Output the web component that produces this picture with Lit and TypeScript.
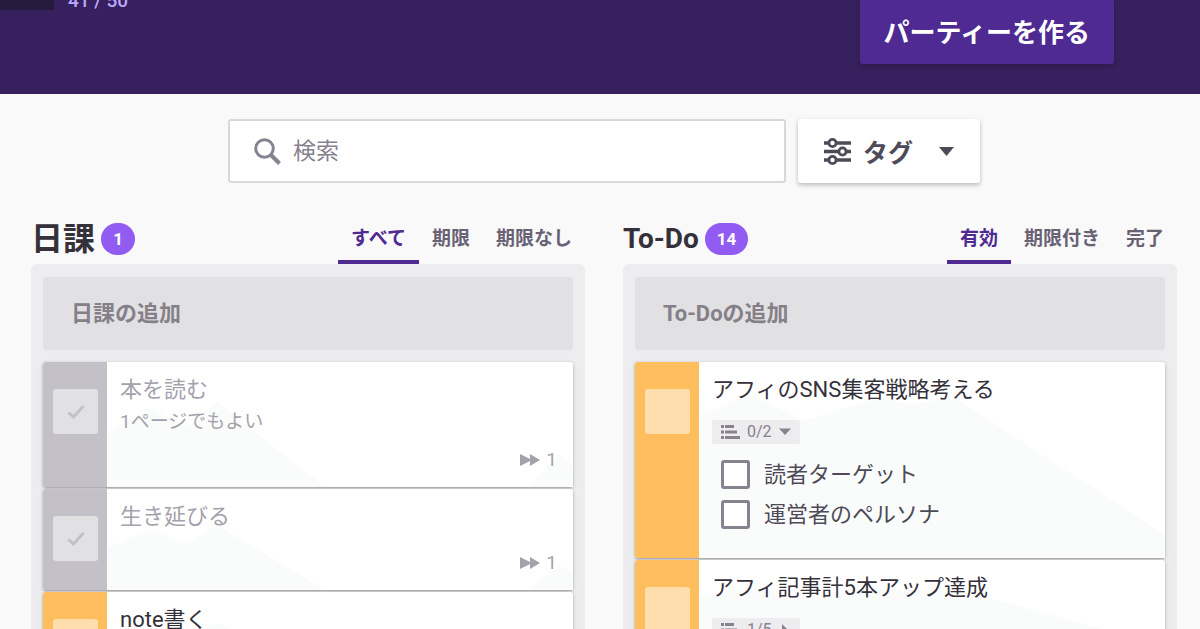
import { LitElement, html, css, svg, nothing } from "lit";
import { customElement, property } from "lit/decorators.js";
import { classMap } from "lit/directives/class-map.js";

interface Task {
  title: string;
  notes?: string;
  done?: boolean;
  streak?: number;
  progress?: string;
  open?: boolean;
  items?: string[];
}

const shared = css`
  *,
  *::before,
  *::after {
    box-sizing: border-box;
  }
  button,
  input {
    font: inherit;
    color: inherit;
    margin: 0;
    border: 0;
    padding: 0;
    background: none;
  }
  svg {
    display: block;
    flex: none;
  }
`;

@customElement("task-card")
class TaskCard extends LitElement {
  @property({ attribute: false }) task!: Task;

  static styles = [
    shared,
    css`
      :host {
        display: block;
      }
      .card {
        display: flex;
        border-radius: 3px;
        background: #fff;
        color: #34313a;
        box-shadow: 0 1px 2px rgba(26, 24, 29, 0.26), 0 1px 4px rgba(26, 24, 29, 0.16);
      }
      .control {
        flex: none;
        width: 64px;
        padding: 27px 10px 0;
        border-radius: 3px 0 0 3px;
        background: #ffbe5d;
      }
      .tick {
        display: grid;
        place-items: center;
      }
      .tick > * {
        grid-area: 1 / 1;
      }
      .tick svg {
        pointer-events: none;
      }
      .box {
        appearance: none;
        width: 45px;
        height: 45px;
        border-radius: 3px;
        background: #ffdeae;
      }
      .done .control {
        background: #c3c0c7;
      }
      .done .box {
        background: #e1e0e3;
      }
      .done .body {
        color: #a5a1ac;
      }
      .body {
        position: relative;
        flex: 1;
        min-width: 0;
        padding: 12px 16px 13px 13px;
        overflow: hidden;
      }
      .ridge {
        position: absolute;
        inset: auto 0 0;
        width: 100%;
        height: calc(100% - 24px);
      }
      .content {
        position: relative;
        display: flex;
        flex-direction: column;
        align-items: flex-start;
      }
      .title {
        margin: 0 0 4px;
        font-size: 22px;
        line-height: 32px;
        font-weight: 400;
      }
      .notes {
        margin: 0;
        font-size: 19px;
        line-height: 24px;
      }
      .streak {
        display: flex;
        align-items: center;
        align-self: flex-end;
        gap: 6px;
        margin-top: 12px;
        font-size: 19px;
        line-height: 28px;
      }
      .toggle {
        display: flex;
        align-items: center;
        gap: 7px;
        height: 24px;
        margin-top: 10px;
        padding: 0 9px;
        border-radius: 2px;
        background: #edecee;
        color: #878190;
        font-size: 16px;
        line-height: 24px;
      }
      .items {
        margin: 10px 0 0;
        padding: 0 0 11px;
        list-style: none;
      }
      .item {
        display: flex;
        align-items: center;
        gap: 14px;
        height: 40px;
        padding-left: 9px;
        color: #4e4a57;
        font-size: 22px;
      }
      .item span {
        padding-bottom: 4px;
      }
      .sub {
        appearance: none;
        flex: none;
        width: 29px;
        height: 29px;
        border: 3px solid #878190;
        border-radius: 3px;
        background: #fff;
      }
    `,
  ];

  private ridge() {
    return this.task.progress
      ? svg`<svg class="ridge" viewBox="0 0 466 171" preserveAspectRatio="none" aria-hidden="true">
          <path d="M0 30 50 8 105 34 180 12 210 18 256 12 466 148V171H0Z" fill="#fafcfb" />
        </svg>`
      : svg`<svg class="ridge" viewBox="0 0 466 77" preserveAspectRatio="none" aria-hidden="true">
          <path d="M0 35 43 17 80 31 110 12 218 77H0ZM421 77 452 52 466 60V77Z" fill="#fafcfb" />
        </svg>`;
  }

  render() {
    const t = this.task;
    return html`
      <article class=${classMap({ card: true, done: !!t.done })}>
        <div class="control">
          <label class="tick">
            <input class="box" type="checkbox" aria-label=${t.title} .checked=${!!t.done} />
            ${t.done
              ? html`<svg width="18" height="16" viewBox="0 0 18 16">
                  <path d="M1.5 8.5 6.5 13 16.5 2" fill="none" stroke="#c3c0c7" stroke-width="3" />
                </svg>`
              : nothing}
          </label>
        </div>
        <div class="body">
          ${this.ridge()}
          <div class="content">
            <h3 class="title">${t.title}</h3>
            ${t.notes ? html`<p class="notes">${t.notes}</p>` : nothing}
            ${t.streak
              ? html`<div class="streak">
                  <svg width="20" height="12" viewBox="0 0 20 12">
                    <path d="M0 0 10 5V0L20 6 10 12V7L0 12Z" fill="#a5a1ac" />
                  </svg>
                  <span>${t.streak}</span>
                </div>`
              : nothing}
            ${t.progress
              ? html`<button class="toggle" type="button" aria-expanded=${t.open ? "true" : "false"}>
                  <svg width="19" height="14" viewBox="0 0 19 14">
                    <path
                      d="M0 0H3V3H0ZM4 0H13V3H4ZM0 5.5H3V8.5H0ZM4 5.5H16V8.5H4ZM0 11H3V14H0ZM4 11H19V14H4Z"
                      fill="#878190"
                    />
                  </svg>
                  <span>${t.progress}</span>
                  <svg width="12" height="12" viewBox="0 0 12 12">
                    <path d=${t.open ? "M0 2.5H12L6 9Z" : "M3 0 9 6 3 12Z"} fill="#878190" />
                  </svg>
                </button>`
              : nothing}
            ${t.items
              ? html`<ul class="items">
                  ${t.items.map(
                    (i) => html`<li>
                      <label class="item"><input class="sub" type="checkbox" /><span>${i}</span></label>
                    </li>`
                  )}
                </ul>`
              : nothing}
          </div>
        </div>
      </article>
    `;
  }
}

@customElement("task-column")
class TaskColumn extends LitElement {
  @property() heading = "";
  @property({ type: Number }) count = 0;
  @property({ attribute: false }) tabs: string[] = [];
  @property({ attribute: false }) tasks: Task[] = [];

  static styles = [
    shared,
    css`
      :host {
        display: block;
        min-width: 0;
      }
      .head {
        display: flex;
        align-items: center;
        height: 50px;
      }
      .heading {
        margin: 0;
        color: #34313a;
        font-size: 32px;
        line-height: 48px;
        font-weight: 700;
      }
      .latin {
        font-size: 28px;
      }
      .count {
        min-width: 34px;
        margin: 0 auto 0 6px;
        padding: 0 12px;
        border-radius: 16px;
        background: #925cf3;
        color: #fff;
        font-size: 17px;
        line-height: 32px;
        font-weight: 700;
        text-align: center;
      }
      .tabs {
        display: flex;
        align-self: stretch;
      }
      .tab {
        padding: 4px 13px 0;
        border-bottom: 4px solid transparent;
        color: #686274;
        font-size: 19px;
        line-height: 42px;
        font-weight: 700;
        white-space: nowrap;
      }
      .active {
        border-color: #4f2a93;
        color: #4f2a93;
      }
      .panel {
        display: flex;
        flex-direction: column;
        gap: 2px;
        min-height: 100vh;
        padding: 13px 12px;
        border-radius: 6px;
        background: #edecee;
      }
      .add {
        width: 100%;
        height: 73px;
        margin-bottom: 10px;
        padding: 0 28px;
        border-radius: 3px;
        background: #e1e0e3;
        font-size: 22px;
        font-weight: 700;
      }
      .add::placeholder {
        color: #858088;
        opacity: 1;
      }
    `,
  ];

  render() {
    const latin = /^[ -~]+$/.test(this.heading);
    return html`
      <div class="head">
        <h2 class=${classMap({ heading: true, latin })}>${this.heading}</h2>
        <span class="count">${this.count}</span>
        <div class="tabs" role="tablist">
          ${this.tabs.map(
            (t, i) => html`<button
              type="button"
              role="tab"
              aria-selected=${i === 0 ? "true" : "false"}
              class=${classMap({ tab: true, active: i === 0 })}
            >
              ${t}
            </button>`
          )}
        </div>
      </div>
      <div class="panel">
        <input class="add" type="text" placeholder="${this.heading}の追加" aria-label="${this.heading}の追加" />
        ${this.tasks.map((t) => html`<task-card .task=${t}></task-card>`)}
      </div>
    `;
  }
}

@customElement("app-root")
class AppRoot extends LitElement {
  static styles = [
    shared,
    css`
      :host {
        display: block;
        height: 100vh;
        overflow: hidden;
        background: #f9f9f9;
        color: #34313a;
        font-family: Roboto, "Noto Sans CJK JP", sans-serif;
      }
      .banner {
        display: flex;
        align-items: flex-start;
        gap: 14px;
        padding: 0 86px 30px 0;
        background: #36205d;
      }
      .avatar {
        width: 54px;
        height: 10px;
        background: #271b3d;
      }
      .stat {
        display: flex;
        align-items: flex-end;
        height: 11px;
        margin-right: auto;
        overflow: hidden;
        color: #bda8ff;
        font-size: 19px;
        line-height: 20px;
        font-weight: 500;
      }
      .party {
        height: 64px;
        padding: 0 24px 4px;
        border-radius: 0 0 3px 3px;
        background: #4f2a93;
        box-shadow: 0 2px 4px rgba(26, 24, 29, 0.3);
        color: #fff;
        font-size: 26px;
        font-weight: 700;
      }
      .main {
        padding: 25px 23px 0 31px;
      }
      .filters {
        display: flex;
        gap: 12px;
        max-width: 752px;
        height: 64px;
        margin: 0 auto 31px;
      }
      .search {
        display: flex;
        flex: 1;
        align-items: center;
        gap: 12px;
        padding: 0 24px;
        border: 2px solid #d8d7db;
        border-radius: 3px;
        background: #fff;
      }
      .query {
        flex: 1;
        min-width: 0;
        height: 100%;
        font-size: 23px;
      }
      .query::placeholder {
        color: #878190;
        opacity: 1;
      }
      .tags {
        display: flex;
        align-items: center;
        gap: 12px;
        padding: 0 26px;
        border-radius: 3px;
        background: #fff;
        box-shadow: 0 2px 4px rgba(26, 24, 29, 0.28);
        color: #4e4a57;
        font-size: 25px;
        font-weight: 700;
      }
      .caret {
        margin-left: 14px;
      }
      .columns {
        display: grid;
        grid-template-columns: repeat(2, minmax(0, 1fr));
        gap: 38px;
      }
    `,
  ];

  private dailies: Task[] = [
    { title: "本を読む", notes: "1ページでもよい", done: true, streak: 1 },
    { title: "生き延びる", done: true, streak: 1 },
    { title: "note書く" },
  ];

  private todos: Task[] = [
    {
      title: "アフィのSNS集客戦略考える",
      progress: "0/2",
      open: true,
      items: ["読者ターゲット", "運営者のペルソナ"],
    },
    { title: "アフィ記事計5本アップ達成", progress: "1/5" },
  ];

  render() {
    const knob = (cx: number, cy: number) =>
      svg`<circle cx=${cx} cy=${cy} r="3.6" fill="#fff" stroke="#4e4a57" stroke-width="2.8" />`;
    return html`
      <header class="banner">
        <div class="avatar"></div>
        <div class="stat">41 / 50</div>
        <button class="party" type="button">パーティーを作る</button>
      </header>
      <main class="main">
        <div class="filters">
          <label class="search">
            <svg width="27" height="27" viewBox="0 0 27 27" fill="none" stroke="#878190">
              <circle cx="10.5" cy="10.5" r="8.8" stroke-width="3" />
              <path d="M16.5 16.5 25.5 25.5" stroke-width="4" />
            </svg>
            <input class="query" type="search" placeholder="検索" aria-label="検索" />
          </label>
          <button class="tags" type="button">
            <svg width="27" height="28" viewBox="0 0 27 28">
              <path d="M0 6H27M0 14.5H27M0 23H27" stroke="#4e4a57" stroke-width="3.4" />
              ${knob(8.5, 6)}${knob(18.5, 14.5)}${knob(8.5, 23)}
            </svg>
            <span>タグ</span>
            <svg class="caret" width="15" height="9" viewBox="0 0 15 9">
              <path d="M0 0H15L7.5 9Z" fill="#4e4a57" />
            </svg>
          </button>
        </div>
        <div class="columns">
          <task-column
            heading="日課"
            .count=${1}
            .tabs=${["すべて", "期限", "期限なし"]}
            .tasks=${this.dailies}
          ></task-column>
          <task-column
            heading="To-Do"
            .count=${14}
            .tabs=${["有効", "期限付き", "完了"]}
            .tasks=${this.todos}
          ></task-column>
        </div>
      </main>
    `;
  }
}
